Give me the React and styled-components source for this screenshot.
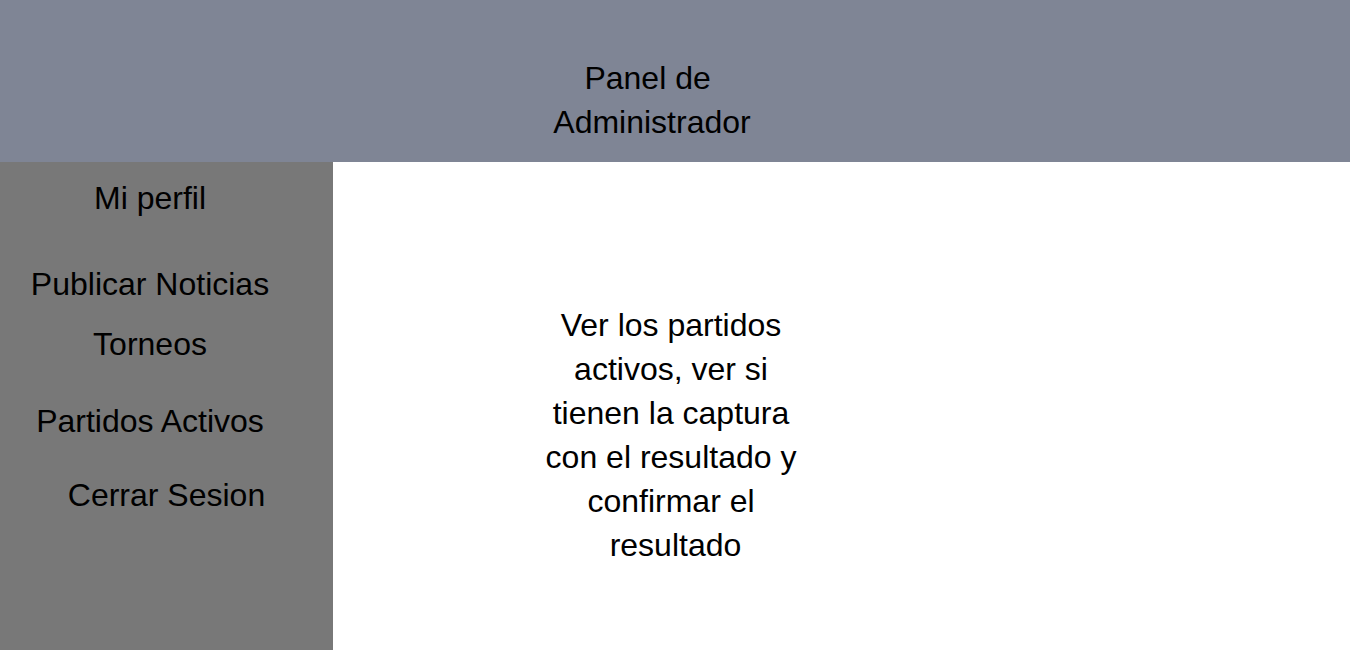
import React from 'react';
import styled, { createGlobalStyle } from 'styled-components';

const GlobalStyle = createGlobalStyle`
  body {
    margin: 0;
    font-family: "Liberation Sans", Arial, sans-serif;
    color: #000;
    background: #fff;
  }
`;

const menu = [
  { label: 'Mi perfil', gap: 14 },
  { label: 'Publicar Noticias', gap: 42 },
  { label: 'Torneos', gap: 16 },
  { label: 'Partidos Activos', gap: 33 },
  { label: 'Cerrar Sesion', gap: 30, full: true },
];

export default function App() {
  return (
    <>
      <GlobalStyle />
      <Page>
        <Header>
          <Title>Panel de{'\u00a0'} Administrador</Title>
        </Header>
        <Body>
          <Sidebar>
            {menu.map((item) => (
              <MenuItem key={item.label} $gap={item.gap} $full={item.full}>
                {item.label}
              </MenuItem>
            ))}
          </Sidebar>
          <Main>
            <Description>
              Ver los partidos activos, ver si tienen la captura con el resultado y
              confirmar el {'\u00a0'}resultado
            </Description>
          </Main>
        </Body>
      </Page>
    </>
  );
}

const Page = styled.div`
  width: 100%;
  height: 650px;
  display: flex;
  flex-direction: column;
`;

const Header = styled.header`
  height: 162px;
  box-sizing: border-box;
  background-color: #7f8595;
  display: flex;
  justify-content: center;
  padding: 56px 46px 0 0;
`;

const Title = styled.h1`
  margin: 0;
  width: 300px;
  font-size: 32px;
  font-weight: 400;
  line-height: 44px;
  text-align: center;
`;

const Body = styled.div`
  flex: 1;
  display: flex;
`;

const Sidebar = styled.nav`
  width: 333px;
  background-color: #787878;
  display: flex;
  flex-direction: column;
`;

const MenuItem = styled.div`
  width: ${(p) => (p.$full ? '333px' : '300px')};
  margin-top: ${(p) => p.$gap}px;
  font-size: 32px;
  line-height: 44px;
  text-align: center;
  white-space: nowrap;
`;

const Main = styled.main`
  flex: 1;
  display: flex;
  align-items: flex-start;
  padding: 141px 0 0 198px;
`;

const Description = styled.p`
  margin: 0;
  width: 280px;
  font-size: 32px;
  line-height: 44px;
  text-align: center;
`;
